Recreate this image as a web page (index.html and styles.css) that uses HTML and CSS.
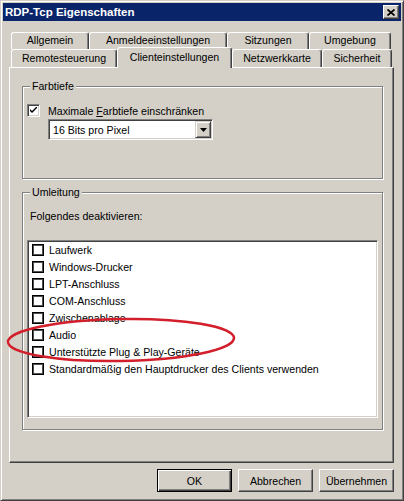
FILE: index.html
```html
<!DOCTYPE html>
<html lang="de">
<head>
    <meta charset="UTF-8">
    <title>RDP-Tcp Eigenschaften</title>
    <link rel="stylesheet" href="styles.css">
</head>
<body>
    <div class="window">
        <div class="titlebar">
            <span class="title">RDP-Tcp Eigenschaften</span>
            <span class="close">
                <svg width="8" height="7" viewBox="0 0 8 7"><path d="M0.5 0.5L7.5 6.5M7.5 0.5L0.5 6.5" stroke="#000" stroke-width="1.7" fill="none"/></svg>
            </span>
        </div>

        <div class="sheet">
            <div class="tabrow row1">
                <div class="tab tab-allg">Allgemein</div>
                <div class="tab tab-anm">Anmeldeeinstellungen</div>
                <div class="tab tab-sitz">Sitzungen</div>
                <div class="tab tab-umg">Umgebung</div>
            </div>
            <div class="tabrow row2">
                <div class="tab tab-rem">Remotesteuerung</div>
                <div class="tab tab-cli selected">Clienteinstellungen</div>
                <div class="tab tab-netz">Netzwerkkarte</div>
                <div class="tab tab-sich">Sicherheit</div>
            </div>

            <div class="panel">
                <fieldset class="group group-farbe">
                    <legend>Farbtiefe</legend>
                    <label class="check">
                        <span class="box">
                            <svg width="7" height="7" viewBox="0 0 7 7"><path d="M0 2L2 4L7 -1L7 1L2 6L0 4Z" fill="#000"/></svg>
                        </span>
                        <span>Maximale <u>F</u>arbtiefe einschränken</span>
                    </label>
                    <div class="combo">
                        <span class="combo-text">16 Bits pro Pixel</span>
                        <span class="combo-btn">
                            <svg width="7" height="4" viewBox="0 0 7 4"><path d="M0 0H7L3.5 4Z" fill="#000"/></svg>
                        </span>
                    </div>
                </fieldset>

                <fieldset class="group group-umleitung">
                    <legend>Umleitung</legend>
                    <div class="hint">Folgendes deaktivieren:</div>
                    <ul class="list">
                        <li><span class="box"></span>Laufwerk</li>
                        <li><span class="box"></span>Windows-Drucker</li>
                        <li><span class="box"></span>LPT-Anschluss</li>
                        <li><span class="box"></span>COM-Anschluss</li>
                        <li><span class="box"></span>Zwischenablage</li>
                        <li><span class="box"></span>Audio</li>
                        <li><span class="box"></span>Unterstützte Plug &amp; Play-Geräte</li>
                        <li><span class="box"></span>Standardmäßig den Hauptdrucker des Clients verwenden</li>
                    </ul>
                </fieldset>
            </div>

            <div class="buttons">
                <button type="button" class="default">OK</button>
                <button type="button">Abbrechen</button>
                <button type="button">Übernehmen</button>
            </div>
        </div>

        <!-- roter Kreis aus dem Screenshot -->
        <svg class="mark" width="250" height="60" viewBox="0 0 250 60">
            <ellipse cx="121" cy="30" rx="113" ry="21" fill="none" stroke="#d21f2b" stroke-width="2.5" transform="rotate(-1 121 30)"/>
        </svg>
    </div>
</body>
</html>
```

FILE: styles.css
```css
body {
    margin: 0;
    background-color: #d4d0c8;
    font-family: "Liberation Sans", Arial, sans-serif;
    font-size: 10.6px;
    color: #000;
}
.window {
    position: relative;
    width: 404px;
    height: 501px;
    box-sizing: border-box;
    padding: 2px;
    border: 1px solid;
    border-color: #d4d0c8 #404040 #404040 #d4d0c8;
    box-shadow: inset 1px 1px #fff, inset -1px -1px #808080;
    display: flex;
    flex-direction: column;
}
.titlebar {
    height: 18px;
    background-color: #0a246a;
    display: flex;
    align-items: center;
    justify-content: space-between;
    padding: 0 2px;
    color: #fff;
    font-size: 11.5px;
    font-weight: bold;
}
.close {
    width: 16px;
    height: 14px;
    box-sizing: border-box;
    background-color: #d4d0c8;
    border: 1px solid;
    border-color: #fff #404040 #404040 #fff;
    box-shadow: inset -1px -1px #808080;
    display: flex;
    align-items: center;
    justify-content: center;
}
.sheet {
    padding: 11px 7px 0 6px;
}
.tabrow {
    display: flex;
    align-items: flex-end;
    padding-left: 2px;
}
.row1 {
    height: 17px;
}
.row2 {
    height: 18px;
}
.tab {
    flex: none;
    box-sizing: border-box;
    height: 100%;
    border: 1px solid;
    border-bottom: none;
    border-color: #fff #404040 transparent #fff;
    border-radius: 3px 3px 0 0;
    box-shadow: inset -1px 0 #808080;
    text-align: center;
    line-height: 15px;
    white-space: nowrap;
}
.row2 .tab {
    line-height: 17px;
}
.tab-allg { width: 78px; }
.tab-anm { width: 138px; }
.tab-sitz { width: 82px; }
.tab-umg { width: 82px; }
.tab-rem { width: 106px; }
.tab-cli { width: 115px; }
.tab-netz { width: 90px; }
.tab-sich { width: 70px; }
.row2 .tab.selected {
    position: relative;
    z-index: 1;
    height: 21px;
    margin-top: -2px;
    margin-bottom: -1px;
    background-color: #d4d0c8;
    line-height: 19px;
}
.panel {
    height: 396px;
    box-sizing: border-box;
    border: 1px solid;
    border-color: #fff #404040 #404040 #fff;
    box-shadow: inset -1px -1px #808080;
    padding: 12px 10px 0 12px;
}
.group {
    margin: 0;
    padding: 0 4px;
    border: 1px solid #808080;
    box-shadow: inset 1px 1px #fff, 1px 1px #fff;
}
.group legend {
    margin-left: 3px;
    padding: 0 2px;
    line-height: 13px;
    background-color: #d4d0c8;
}
.group-farbe {
    padding-top: 11px;
    padding-bottom: 38px;
}
.group-umleitung {
    margin-top: 7px;
    padding-top: 11px;
    padding-bottom: 11px;
}
.box {
    flex: none;
    width: 13px;
    height: 13px;
    box-sizing: border-box;
    background-color: #fff;
    border: 1px solid;
    border-color: #808080 #fff #fff #808080;
    box-shadow: inset 1px 1px #404040, inset -1px -1px #d4d0c8;
    display: flex;
    align-items: center;
    justify-content: center;
}
.check {
    display: flex;
    align-items: center;
    height: 13px;
}
.check .box {
    margin-right: 8px;
}
.combo {
    margin: 2px 0 0 21px;
    width: 165px;
    height: 21px;
    box-sizing: border-box;
    padding: 1px;
    background-color: #fff;
    border: 1px solid;
    border-color: #808080 #fff #fff #808080;
    box-shadow: inset 1px 1px #404040, inset -1px -1px #d4d0c8;
    display: flex;
    align-items: center;
    justify-content: space-between;
}
.combo-text {
    padding-left: 3px;
}
.combo-btn {
    width: 16px;
    height: 17px;
    box-sizing: border-box;
    background-color: #d4d0c8;
    border: 1px solid;
    border-color: #d4d0c8 #404040 #404040 #d4d0c8;
    box-shadow: inset 1px 1px #fff, inset -1px -1px #808080;
    display: flex;
    align-items: center;
    justify-content: center;
}
.hint {
    padding-left: 3px;
    line-height: 13px;
}
.list {
    list-style: none;
    margin: 17px 0 0;
    padding: 0 4px;
    height: 178px;
    box-sizing: border-box;
    background-color: #fff;
    border: 1px solid;
    border-color: #808080 #fff #fff #808080;
    box-shadow: inset 1px 1px #404040, inset -1px -1px #d4d0c8;
}
.list li {
    display: flex;
    align-items: center;
    height: 17px;
}
/* Listenkästchen sind flach gezeichnet */
.list .box {
    margin-right: 5px;
    width: 12px;
    height: 12px;
    border: 1px solid #000;
    box-shadow: inset 0 0 0 1px #505050;
}
.buttons {
    display: flex;
    justify-content: flex-end;
    gap: 6px;
    margin-top: 6px;
}
button {
    width: 75px;
    height: 23px;
    padding: 0;
    font: inherit;
    color: #000;
    background-color: #d4d0c8;
    border: 1px solid;
    border-color: #fff #404040 #404040 #fff;
    box-shadow: inset -1px -1px #808080;
}
button.default {
    border-color: #000;
    box-shadow: inset 1px 1px #fff, inset -1px -1px #404040, inset -2px -2px #808080;
}
.mark {
    position: absolute;
    left: -1px;
    top: 309px;
}
```
